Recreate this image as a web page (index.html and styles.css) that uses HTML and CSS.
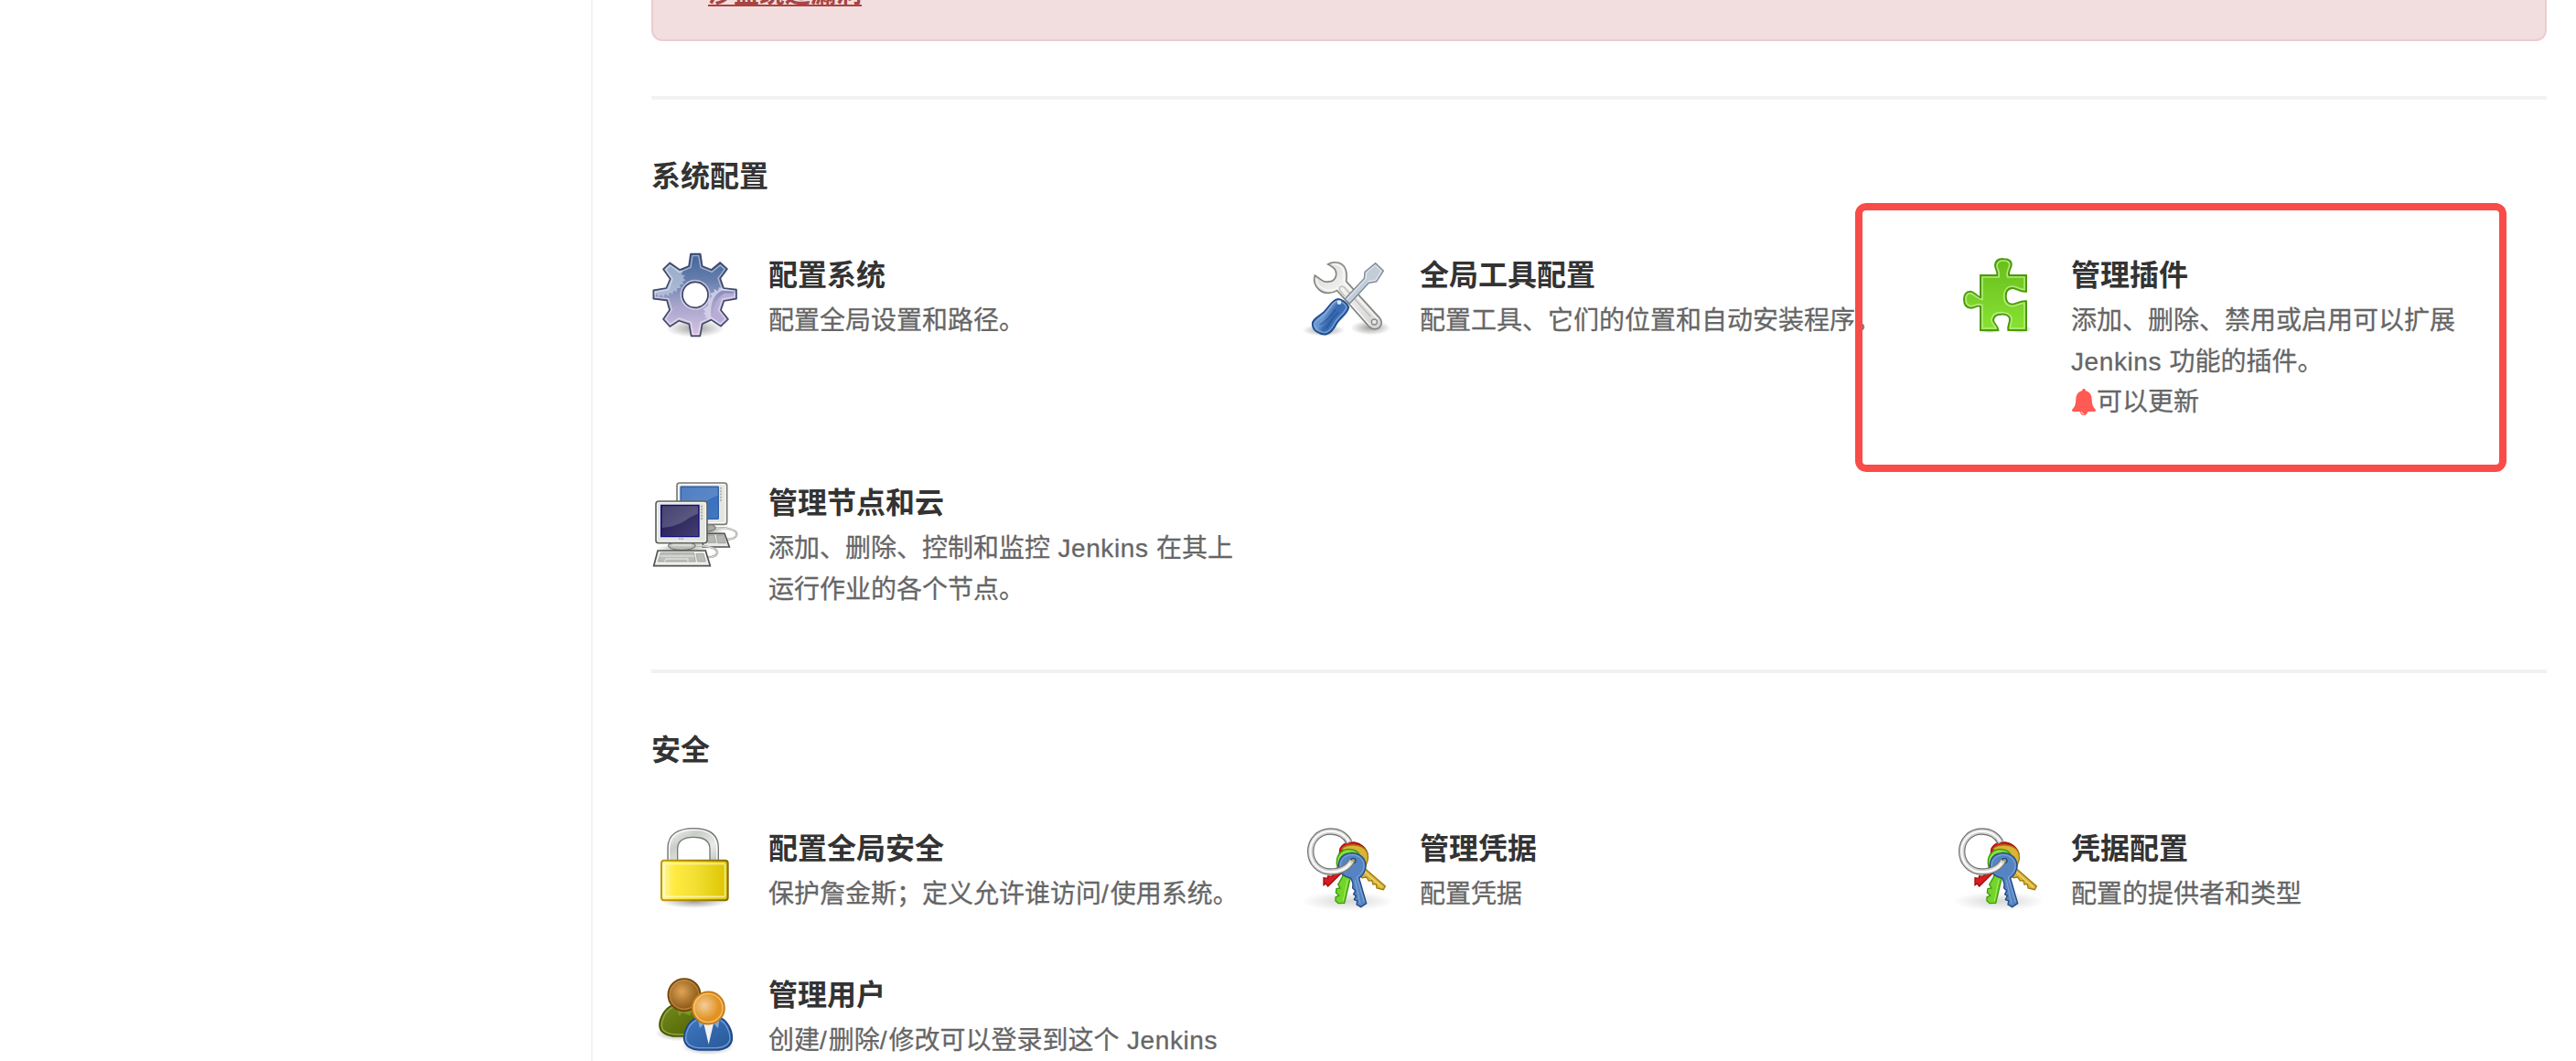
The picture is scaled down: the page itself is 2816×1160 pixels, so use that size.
FILE: index.html
```html
<!DOCTYPE html>
<html lang="zh-CN">
<head>
  <meta charset="UTF-8" />
  <meta name="viewport" content="width=device-width, initial-scale=1.0"/>
  <title>系统管理 [Jenkins]</title>
  <link rel="stylesheet" href="styles.css">
</head>
<body>
  <!-- shared icon shapes and gradients -->
  <svg class="defs" width="0" height="0">
    <defs>
      <radialGradient id="shadow">
        <stop offset="0" stop-color="#000" stop-opacity=".38"/>
        <stop offset="1" stop-color="#000" stop-opacity="0"/>
      </radialGradient>
      <radialGradient id="shadow-soft">
        <stop offset="0" stop-color="#000" stop-opacity=".16"/>
        <stop offset="1" stop-color="#000" stop-opacity="0"/>
      </radialGradient>
      <linearGradient id="gear-fill" x1="0" y1="0" x2="0" y2="1">
        <stop offset="0" stop-color="#41659a"/>
        <stop offset=".32" stop-color="#667ead"/>
        <stop offset=".6" stop-color="#a3a2ca"/>
        <stop offset="1" stop-color="#d6c3e3"/>
      </linearGradient>
      <linearGradient id="steel" x1="0" y1="0" x2="1" y2="1">
        <stop offset="0" stop-color="#d6d7d3"/>
        <stop offset=".4" stop-color="#f1f1ef"/>
        <stop offset="1" stop-color="#d3d4d2"/>
      </linearGradient>
      <linearGradient id="handle" x1="0" y1="0" x2="1" y2=".6">
        <stop offset="0" stop-color="#3667ab"/>
        <stop offset=".45" stop-color="#6d9ad3"/>
        <stop offset=".6" stop-color="#3568ad"/>
        <stop offset="1" stop-color="#4a7ec1"/>
      </linearGradient>
      <linearGradient id="puzzle-fill" x1="0" y1="0" x2="0" y2="1">
        <stop offset="0" stop-color="#68bd1c"/>
        <stop offset="1" stop-color="#88e232"/>
      </linearGradient>
      <linearGradient id="screen-dark" x1="0" y1="0" x2="1" y2="1">
        <stop offset="0" stop-color="#17134f"/>
        <stop offset="1" stop-color="#474171"/>
      </linearGradient>
      <linearGradient id="screen-blue" x1="0" y1="0" x2="1" y2="1">
        <stop offset="0" stop-color="#2c63b5"/>
        <stop offset="1" stop-color="#4479c2"/>
      </linearGradient>
      <linearGradient id="lock-fill" x1="0" y1="0" x2="1" y2="0">
        <stop offset="0" stop-color="#fff7a8"/>
        <stop offset=".2" stop-color="#ffea3e"/>
        <stop offset=".5" stop-color="#f2e034"/>
        <stop offset="1" stop-color="#dcc400"/>
      </linearGradient>
      <linearGradient id="lock-edge" x1="0" y1="0" x2="1" y2="0">
        <stop offset="0" stop-color="#c09a08"/>
        <stop offset="1" stop-color="#866a00"/>
      </linearGradient>
      <linearGradient id="shackle" x1="0" y1="0" x2="1" y2="1">
        <stop offset="0" stop-color="#fafafa"/>
        <stop offset=".35" stop-color="#c9cdc8"/>
        <stop offset=".7" stop-color="#e9ebe8"/>
        <stop offset="1" stop-color="#bdc2bc"/>
      </linearGradient>
      <radialGradient id="face-brown" cx=".42" cy=".4">
        <stop offset="0" stop-color="#dfa356"/>
        <stop offset="1" stop-color="#93601c"/>
      </radialGradient>
      <radialGradient id="face-orange" cx=".38" cy=".42">
        <stop offset="0" stop-color="#f3cd9c"/>
        <stop offset=".9" stop-color="#e1921f"/>
      </radialGradient>
      <linearGradient id="coat-green" x1="0" y1="0" x2="1" y2="1">
        <stop offset="0" stop-color="#748a1e"/>
        <stop offset="1" stop-color="#4f6200"/>
      </linearGradient>
      <linearGradient id="coat-blue" x1="0" y1="0" x2="1" y2="1">
        <stop offset="0" stop-color="#3f78c2"/>
        <stop offset="1" stop-color="#275796"/>
      </linearGradient>
      <clipPath id="gear-clip">
        <path clip-rule="evenodd" d="M165 38H197L203 78L233 90L262 66L285 87L262 118L273 150L315 155V185L274 192L264 222L288 252L264 275L232 254L203 268L196 307H167L160 268L127 257L97 276L75 252L96 222L87 190L43 185V157L85 150L98 120L75 88L97 67L129 90L159 78ZM180 131a41 41 0 1 0 .1 0Z"/>
      </clipPath>
    </defs>

    <symbol id="icon-gear" viewBox="36 30 288 288">
      <ellipse cx="180" cy="282" rx="98" ry="30" fill="url(#shadow)"/>
      <path fill="url(#gear-fill)" fill-rule="evenodd" d="M165 38H197L203 78L233 90L262 66L285 87L262 118L273 150L315 155V185L274 192L264 222L288 252L264 275L232 254L203 268L196 307H167L160 268L127 257L97 276L75 252L96 222L87 190L43 185V157L85 150L98 120L75 88L97 67L129 90L159 78ZM180 131a41 41 0 1 0 .1 0Z"/>
      <g clip-path="url(#gear-clip)">
        <path fill="#c3cfe4" opacity=".65" d="M70 60L129 90L140 94L134 106L146 108L140 118L149 124L138 130L142 138L130 138L132 150L121 150L119 162L108 158L106 170L96 164L92 176L82 168L76 180L68 172L58 180L55 170H43V150L85 148Z"/>
        <path fill="#e0daf0" opacity=".75" d="M320 158H268C236 172 228 208 232 250L210 246L216 240L206 234L214 228L206 220L222 208L224 188L234 178L230 166L242 164V152L254 160L258 148Z"/>
        <path fill="#b9acd6" d="M320 167L276 167C252 180 238 208 238 248L300 290Z"/>
      </g>
      <path class="line" stroke="#fff" stroke-opacity=".48" stroke-width="4" d="M171 44H191L198 82L235 97L262 75L277 88L255 118L268 155L309 160V179L269 186L257 222L279 251L263 267L233 247L198 262L191 301H172L166 262L126 249L98 268L83 251L103 221L92 185L49 180V163L92 155L105 120L83 89L98 75L128 98L165 82Z"/>
      <circle cx="180" cy="172" r="47" class="line" stroke="#e3e3f1" stroke-opacity=".7" stroke-width="5"/>
      <path class="line" stroke="#414869" stroke-width="5" d="M165 38H197L203 78L233 90L262 66L285 87L262 118L273 150L315 155V185L274 192L264 222L288 252L264 275L232 254L203 268L196 307H167L160 268L127 257L97 276L75 252L96 222L87 190L43 185V157L85 150L98 120L75 88L97 67L129 90L159 78Z"/>
      <circle cx="180" cy="172" r="42" class="line" stroke="#414869" stroke-width="5"/>
    </symbol>

    <symbol id="icon-tools" viewBox="27 30 288 288">
      <ellipse cx="96" cy="288" rx="70" ry="20" fill="url(#shadow)"/>
      <ellipse cx="250" cy="280" rx="66" ry="24" fill="url(#shadow)"/>
      <path fill="url(#steel)" stroke="#858681" stroke-width="5" d="M110 72C128 60 156 64 166 84C173 98 172 114 170 128L279 247C292 263 284 282 266 284C258 285 251 283 246 277L140 158C124 168 98 170 82 156C66 143 61 124 67 108L90 124C98 131 110 130 120 128C130 124 136 118 137 106C138 93 134 84 110 72Z"/>
      <path class="line" stroke="#fff" stroke-width="4" stroke-opacity=".8" d="M126 72C146 70 160 82 162 98C163 110 160 122 164 133L273 252M72 120C76 150 108 166 140 150L248 272"/>
      <path class="line" stroke="#c2c3c0" stroke-width="5" d="M166 178L150 159C142 147 156 139 165 149L250 244"/>
      <circle cx="262" cy="261" r="9" fill="#e9e9e7" stroke="#8a8b87" stroke-width="4"/>
      <path fill="#c3cdd9" stroke="#7d8795" stroke-width="4" d="M266 68L292 93L269 129L244 133L181 201L165 186L229 118L231 97Z"/>
      <path class="line" stroke="#e9eef3" stroke-width="3" d="M265 75L285 94L266 124L242 128M172 187L234 121L236 100L263 76"/>
      <path fill="url(#handle)" stroke="#1f4a8c" stroke-width="5" d="M141 186C152 184 174 199 178 213C176 233 150 247 138 267C130 282 120 299 103 302C84 304 60 289 59 269C57 253 78 245 96 229C114 212 122 190 141 186Z"/>
      <path class="line" stroke="#8fb2e0" stroke-width="4" stroke-opacity=".75" d="M142 192C153 193 170 203 171 213C167 230 144 243 132 264C124 279 115 293 102 295C88 297 67 284 66 270C66 258 84 249 100 234C117 217 125 196 142 192Z"/>
      <path class="line" stroke="#1d4a91" stroke-width="5" stroke-opacity=".5" d="M82 270C105 262 118 240 134 220M104 282C116 268 126 244 145 230"/>
      <circle cx="147" cy="197" r="7" fill="#eef4fc" opacity=".9"/>
    </symbol>

    <symbol id="icon-puzzle" viewBox="18 30 288 288">
      <ellipse cx="135" cy="289" rx="38" ry="8" fill="url(#shadow)"/>
      <ellipse cx="234" cy="284" rx="38" ry="14" fill="url(#shadow)"/>
      <path fill="url(#puzzle-fill)" stroke="#4d9a0a" stroke-width="6" d="M105 108H160C163 94 152 86 153 73C155 59 166 53 181 54C197 54 208 62 206 75C204 88 194 95 199 108H255V161C232 163 224 149 209 150C195 151 188 161 188 176C188 192 196 203 210 203C225 203 232 191 255 193V288H196C193 273 203 262 201 250C198 238 186 235 172 236C158 236 149 242 147 254C146 266 163 273 163 288H105V210C92 205 86 215 74 215C58 215 51 204 51 186C51 172 58 161 71 161C84 161 91 176 105 182Z"/>
      <path class="line" stroke="#b8ef88" stroke-opacity=".85" stroke-width="5" d="M111 114H165C171 96 158 87 159 75C161 64 169 60 181 60C193 60 202 65 200 75C198 88 188 97 194 114H249V155C232 155 224 143 208 144C191 145 182 158 182 177C182 197 193 209 210 209C225 208 233 199 249 199V282H203C201 270 209 260 207 249C203 235 190 230 172 230C154 230 143 238 141 253C140 267 154 272 156 282H111V206C96 198 86 209 75 209C62 209 57 201 57 187C57 175 62 167 71 167C82 167 92 184 111 188Z"/>
    </symbol>

    <symbol id="icon-computers" viewBox="36 29 288 288">
      <ellipse cx="215" cy="198" rx="64" ry="15" fill="url(#shadow)"/>
      <path class="line" stroke="#9b9d99" stroke-width="7" d="M246 190C282 184 318 196 316 210C314 224 288 228 274 226"/>
      <path class="line" stroke="#eeeeec" stroke-width="3" d="M246 190C282 184 318 196 316 210C314 224 288 228 274 226"/>
      <ellipse cx="219" cy="188" rx="28" ry="12" fill="#a6aaa3" stroke="#666963" stroke-width="3"/>
      <rect x="120" y="41" width="164" height="136" rx="8" fill="#e5e6e1" stroke="#777a75" stroke-width="5"/>
      <rect x="125" y="46" width="154" height="126" rx="5" class="line" stroke="#fff" stroke-width="3"/>
      <path fill="url(#screen-blue)" stroke="#1d50a0" stroke-width="3" d="M132 53H256V159H132Z"/>
      <path fill="#fff" opacity=".17" d="M134 55H254V82C218 92 204 122 134 124Z"/>
      <path class="line" stroke="#b6b9b2" stroke-width="6" stroke-dasharray="6 4" d="M264 55V103"/>
      <path fill="#e9e9e6" stroke="#4f514d" stroke-width="5" d="M205 207H276L292 251H205Z"/>
      <path fill="#b6b9b3" stroke="#8d908a" stroke-width="2" d="M216 212H242L248 237H222ZM250 212H272L280 238H254Z"/>
      <ellipse cx="140" cy="257" rx="90" ry="14" fill="url(#shadow)"/>
      <path class="line" stroke="#9b9d99" stroke-width="7" d="M180 247C220 245 254 256 252 270C250 282 232 286 218 284"/>
      <path class="line" stroke="#eeeeec" stroke-width="3" d="M180 247C220 245 254 256 252 270C250 282 232 286 218 284"/>
      <ellipse cx="136" cy="247" rx="45" ry="14" fill="#b9bdb7" stroke="#666963" stroke-width="3"/>
      <path fill="#d9dbd6" d="M108 236H164L172 249H100Z"/>
      <rect x="51" y="101" width="168" height="137" rx="9" fill="#e4e5e0" stroke="#62655f" stroke-width="5"/>
      <rect x="56" y="106" width="158" height="127" rx="5" class="line" stroke="#fafaf8" stroke-width="3"/>
      <path fill="url(#screen-dark)" stroke="#100b83" stroke-width="4" d="M68 114H192V217H68Z"/>
      <path fill="#fff" opacity=".2" d="M71 117H189V142C150 154 145 181 71 188Z"/>
      <path class="line" stroke="#b0b3ac" stroke-width="7" stroke-dasharray="6 4" d="M201 115V163"/>
      <path class="line" stroke="#878a83" stroke-width="3" stroke-dasharray="3 1" d="M126 224H141"/>
      <path fill="#eeeeec" stroke="#50534e" stroke-width="5" d="M57 263H214L229 313H44Z"/>
      <path fill="#bbbdb9" stroke="#92958f" stroke-width="2" d="M67 270H176L181 299H58ZM183 273H207L214 299H188Z"/>
      <path class="line" stroke="#eeeeec" stroke-width="3" d="M64 281H178M80 300L84 290H156V300"/>
    </symbol>

    <symbol id="icon-lock" viewBox="21 33 288 288">
      <ellipse cx="163" cy="284" rx="110" ry="22" fill="url(#shadow)"/>
      <path fill="url(#shackle)" stroke="#747773" stroke-width="4" d="M75 154V108C75 66 106 44 160 44C214 44 241 66 241 108V154H213V112C213 86 194 73 160 73C126 73 107 86 107 112V154Z"/>
      <path class="line" stroke="#fff" stroke-opacity=".85" stroke-width="4" d="M80 148V108C80 70 110 49 160 49C209 49 236 70 236 108V148"/>
      <rect x="54" y="149" width="218" height="131" rx="9" fill="url(#lock-fill)" stroke="url(#lock-edge)" stroke-width="6"/>
      <rect x="63" y="160" width="200" height="108" rx="5" class="line" stroke="#fffce0" stroke-opacity=".65" stroke-width="5"/>
    </symbol>

    <symbol id="icon-keys" viewBox="27 33 288 288">
      <ellipse cx="175" cy="283" rx="152" ry="32" fill="url(#shadow-soft)"/>
      <path fill="#d81d20" stroke="#a40b0e" stroke-width="4" d="M150 110C158 94 176 88 196 90C218 93 236 108 240 128L200 160L152 193L110 234L103 225L96 230V206L108 208L110 200L122 202L140 184Z"/>
      <path fill="#d9b437" stroke="#a17b0e" stroke-width="4" d="M156 110C176 94 220 94 236 118C244 132 242 148 236 160L232 176L298 234L292 245L270 240L268 227L258 228L254 215L244 216L236 204L222 206L200 182Z"/>
      <path class="line" stroke="#f0d773" stroke-width="4" d="M230 186L288 238"/>
      <path fill="#73d429" stroke="#3d9a0b" stroke-width="4" d="M140 166C134 136 150 114 178 112C196 112 207 118 213 130L206 160L184 205L164 289L144 290L135 282V270L146 264L136 254L138 242L150 240L143 228L156 206L162 190Z"/>
      <path class="line" stroke="#a6ec6a" stroke-width="3" d="M144 158C144 136 156 118 182 118M174 212L160 282"/>
      <path fill="#5684c2" stroke="#204a87" stroke-width="4" d="M145 170C143 143 160 126 187 125C214 124 233 142 234 165C234 184 224 199 212 207L236 290L218 302L204 294L206 282L196 278L202 265L194 260L200 248L191 240L192 226L186 208C164 204 149 190 145 170Z"/>
      <path class="line" stroke="#86aadb" stroke-width="3" d="M151 170C149 147 164 132 187 131C210 130 227 145 228 165C228 182 218 196 205 204L229 286M199 214L216 290"/>
      <circle cx="193" cy="150" r="8" fill="#a7a23c" stroke="#204a87" stroke-width="4"/>
      <path class="line" stroke="#70726e" stroke-width="22" d="M180 90C167 66 146 54 118 54C80 54 53 84 53 119C53 156 80 186 119 186C152 186 178 172 188 150"/>
      <path class="line" stroke="#d2d3d1" stroke-width="15" d="M180 90C167 66 146 54 118 54C80 54 53 84 53 119C53 156 80 186 119 186C152 186 178 172 188 150"/>
      <path class="line" stroke="#fbfbfb" stroke-width="6" d="M178 86C167 66 144 53 118 53C80 53 52 84 52 119C52 156 80 187 119 187C149 187 172 176 184 158"/>
    </symbol>

    <symbol id="icon-users" viewBox="21 33 288 288">
      <ellipse cx="112" cy="236" rx="78" ry="26" fill="url(#shadow)"/>
      <ellipse cx="206" cy="280" rx="88" ry="28" fill="url(#shadow)"/>
      <path fill="url(#coat-green)" stroke="#465800" stroke-width="5" d="M91 144C64 154 48 188 48 210C48 234 74 246 104 246H150C180 246 196 228 190 196C184 168 170 150 157 144Z"/>
      <path class="line" stroke="#a8b95e" stroke-opacity=".7" stroke-width="4" d="M91 151C68 162 55 190 55 210C55 230 78 240 104 240H140"/>
      <path fill="#7d9726" d="M105 160L113 180L122 168L148 178L154 160Z"/>
      <circle cx="129" cy="110" r="53" fill="url(#face-brown)" stroke="#70460c" stroke-width="5"/>
      <circle cx="129" cy="110" r="47" class="line" stroke="#d09a58" stroke-opacity=".55" stroke-width="4"/>
      <path fill="url(#coat-blue)" stroke="#1f4786" stroke-width="5" d="M168 186C142 196 127 230 128 253C129 280 155 291 184 291H230C260 291 286 280 286 252C286 226 270 194 248 186Z"/>
      <path class="line" stroke="#8db2e4" stroke-opacity=".7" stroke-width="4" d="M168 194C146 204 134 231 134 252C135 274 157 284 184 284H230C256 284 279 274 279 252C279 230 266 202 248 194"/>
      <path fill="#82a8d8" d="M175 194L180 220L194 204L208 216L226 204L240 220L244 194Z"/>
      <path fill="#f2f2f2" d="M192 200H226L209 272Z"/>
      <circle cx="208" cy="153" r="53" fill="url(#face-orange)" stroke="#c27a12" stroke-width="5"/>
      <circle cx="208" cy="153" r="47" class="line" stroke="#ffe0ae" stroke-opacity=".6" stroke-width="4"/>
    </symbol>
  </svg>

  <div class="page">
    <div class="side-panel"></div>
    <div class="main-panel">
      <div class="alert">
        <a class="alert-link">沙盒绕过漏洞</a>
      </div>

      <section class="section">
        <h2 class="section-title">系统配置</h2>
        <div class="section-grid">
          <div class="item">
            <svg class="item-icon"><use href="#icon-gear"/></svg>
            <div class="item-text">
              <div class="item-title">配置系统</div>
              <div class="item-desc">配置全局设置和路径。</div>
            </div>
          </div>
          <div class="item">
            <svg class="item-icon"><use href="#icon-tools"/></svg>
            <div class="item-text">
              <div class="item-title">全局工具配置</div>
              <div class="item-desc">配置工具、它们的位置和自动安装程序。</div>
            </div>
          </div>
          <div class="item item-marked">
            <svg class="item-icon"><use href="#icon-puzzle"/></svg>
            <div class="item-text">
              <div class="item-title">管理插件</div>
              <div class="item-desc">添加、删除、禁用或启用可以扩展<br><span class="latin">Jenkins </span>功能的插件。</div>
              <div class="item-desc item-update">
                <svg class="bell" viewBox="0 0 28 30"><path fill="#ff5a53" d="M14 0C15.3 0 16 1 16 2.3C20.5 3.4 22.5 7 22.7 11.5C23 17 23.8 19.8 26.4 22.2C27.6 23.5 27 25 25.4 25H18.2C17.8 27.6 16.3 29 14 29S10.2 27.6 9.8 25H2.6C1 25 .4 23.5 1.6 22.2C4.2 19.8 5 17 5.3 11.5C5.5 7 7.5 3.4 12 2.3C12 1 12.7 0 14 0Z"/><path fill="none" stroke="#fff" d="M11.5 25.2C11.8 26.8 12.7 27.5 14 27.6"/></svg>可以更新
              </div>
            </div>
          </div>
          <div class="item">
            <svg class="item-icon"><use href="#icon-computers"/></svg>
            <div class="item-text">
              <div class="item-title">管理节点和云</div>
              <div class="item-desc">添加、删除、控制和监控<span class="latin"> Jenkins </span>在其上<br>运行作业的各个节点。</div>
            </div>
          </div>
        </div>
      </section>

      <section class="section">
        <h2 class="section-title">安全</h2>
        <div class="section-grid">
          <div class="item">
            <svg class="item-icon"><use href="#icon-lock"/></svg>
            <div class="item-text">
              <div class="item-title">配置全局安全</div>
              <div class="item-desc">保护詹金斯；定义允许谁访问<span class="slash">/</span>使用系统。</div>
            </div>
          </div>
          <div class="item">
            <svg class="item-icon"><use href="#icon-keys"/></svg>
            <div class="item-text">
              <div class="item-title">管理凭据</div>
              <div class="item-desc">配置凭据</div>
            </div>
          </div>
          <div class="item">
            <svg class="item-icon"><use href="#icon-keys"/></svg>
            <div class="item-text">
              <div class="item-title">凭据配置</div>
              <div class="item-desc">配置的提供者和类型</div>
            </div>
          </div>
          <div class="item">
            <svg class="item-icon"><use href="#icon-users"/></svg>
            <div class="item-text">
              <div class="item-title">管理用户</div>
              <div class="item-desc">创建<span class="slash">/</span>删除<span class="slash">/</span>修改可以登录到这个<span class="latin"> Jenkins</span></div>
            </div>
          </div>
        </div>
      </section>
    </div>
  </div>
</body>
</html>
```
FILE: styles.css
```css
*,
*::after {
  box-sizing: border-box;
}

body {
  margin: 0;
  background-color: #fff;
  color: #333;
  font-family: "Liberation Sans", "Noto Sans CJK SC", sans-serif;
  font-size: 28px;
  line-height: 44.5px;
}

.defs {
  position: absolute;
}

.page {
  display: flex;
  height: 1160px;
  overflow: hidden;
}

.side-panel {
  flex: none;
  width: 648px;
  border-right: 2px solid #f2f2f2;
}

.main-panel {
  flex: 1;
  padding: 0 32px 0 64px;
}

/* security warning, scrolled almost out of view */
.alert {
  display: flex;
  align-items: flex-end;
  height: 45px;
  padding: 0 60px 27px;
  background-color: #f2dede;
  border: 2px solid #ebccd1;
  border-top: none;
  border-radius: 0 0 12px 12px;
}

.alert-link {
  color: #a94442;
  font-weight: 700;
  text-decoration: underline;
  text-decoration-thickness: 2px;
  text-decoration-skip-ink: none;
  text-underline-offset: 2px;
}

.section {
  height: 627px;
  margin-top: 60px;
  border-top: 4px solid #f2f2f2;
}

.section + .section {
  margin-top: 0;
}

.section-title {
  margin: 59px 0 56px;
  font-size: 32px;
  font-weight: 700;
  line-height: 51px;
}

.section-grid {
  display: grid;
  grid-template-columns: repeat(3, 648px);
  gap: 61.5px 64px;
}

.item {
  display: flex;
  gap: 32px;
  position: relative;
}

.item-icon {
  flex: none;
  width: 96px;
  height: 96px;
}

.item-title {
  padding-top: 1px;
  font-size: 32px;
  font-weight: 700;
  line-height: 51px;
}

.item-title + .item-desc {
  padding-top: 2px;
}

.item-desc {
  color: #666;
  white-space: nowrap;
  -webkit-text-stroke: 0.3px #666;
}

.latin {
  letter-spacing: 0.6px;
}

.slash {
  letter-spacing: 2px;
}

.item-update {
  display: flex;
  align-items: center;
}

.bell {
  width: 28px;
  height: 30px;
}

/* red frame around the plugin entry */
.item-marked::after {
  content: "";
  position: absolute;
  top: -53px;
  left: -108px;
  width: 712px;
  height: 294px;
  border: 8px solid #f94b48;
  border-radius: 12px;
}

.line {
  fill: none;
  stroke-linejoin: round;
}
```
